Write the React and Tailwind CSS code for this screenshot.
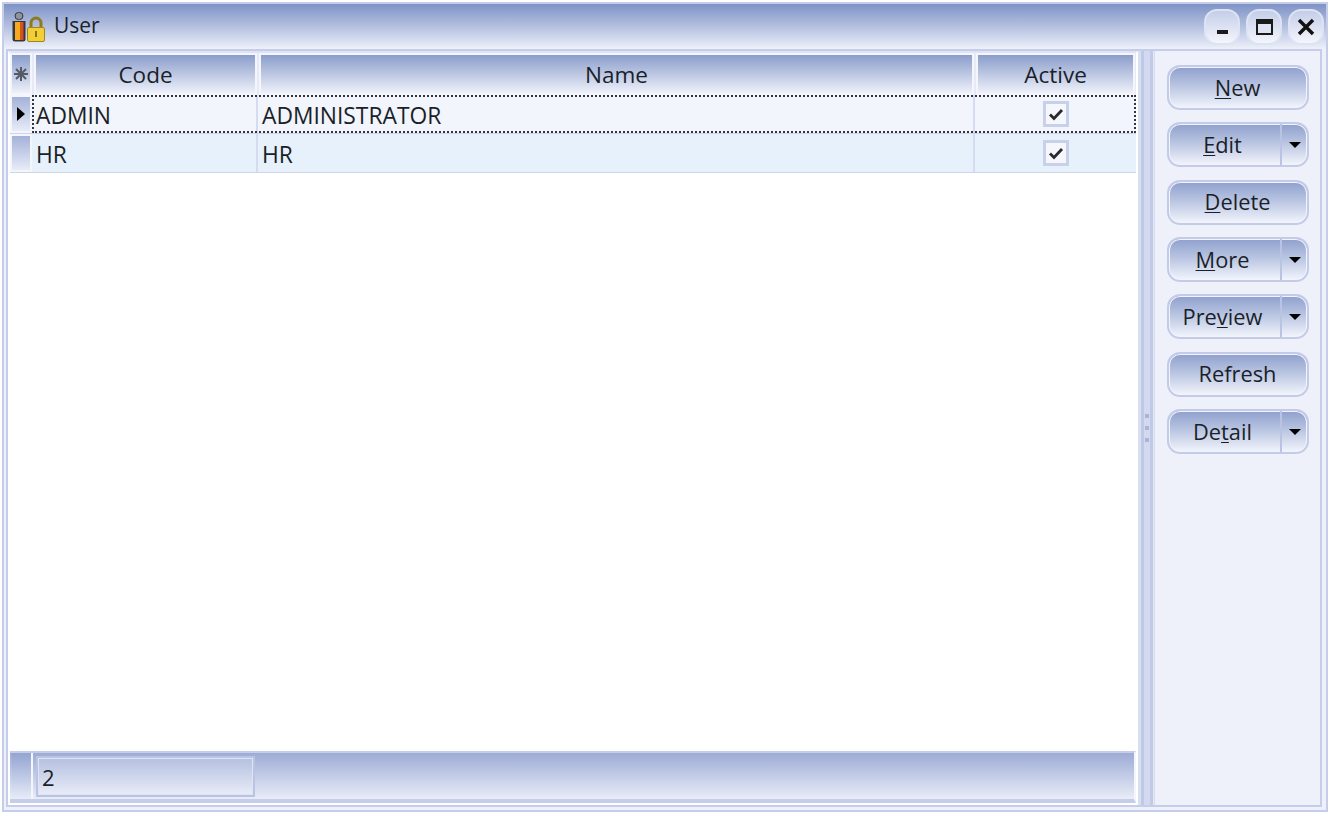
const font = { fontFamily: '"Open Sans", "Noto Sans", sans-serif' }

const headGrad = 'bg-gradient-to-b from-[#8b9dcb] via-[#bcc7e2] to-[#eef1fa]'

function UserIcon() {
  return (
    <svg width="33" height="30" viewBox="0 0 33 30">
      <rect x="3" y="0.5" width="8" height="7" rx="3.5" fill="#8f949c" stroke="#33373e" />
      <path d="M0.5 9h13v18a2.5 2.5 0 0 1-2.5 2.5H3A2.5 2.5 0 0 1 .5 27z" fill="#33363c" />
      <path d="M3 10h5.5v18H3z" fill="#f7aa1e" />
      <path d="M8 10h3.5v18H8z" fill="#d8531b" />
      <path d="M19 16v-5a5 5 0 0 1 10 0v5" fill="none" stroke="#8f7a1c" strokeWidth="3" />
      <rect x="15.5" y="15.5" width="17" height="14" rx="1.5" fill="#f2cf36" stroke="#a08718" />
      <rect x="23" y="19" width="2" height="6" fill="#8a7416" />
    </svg>
  )
}

function WinButton({ children }) {
  return (
    <button className="w-[36px] h-[36px] rounded-[13px] border-2 border-[#dde2f4] bg-gradient-to-b from-[#c4cee8] to-[#f4f6fc] flex items-center justify-center">
      {children}
    </button>
  )
}

function ActionButton({ before, mark, after, split }) {
  return (
    <button className="w-[142px] h-[45px] flex rounded-[13px] border-2 border-[#c3cbe8] bg-gradient-to-b from-[#8fa0cd] via-[#bdc8e3] to-[#f3f5fc] text-[21.8px] text-[#1a1f2a] overflow-hidden shadow-[inset_0_0_0_1px_#f2f4fc]">
      <span className={`flex-1 h-full flex items-center justify-center pt-[1px] ${split ? 'pr-[4px]' : 'pr-[1px]'}`}>
        {before}
        {mark && <span className="underline underline-offset-2 decoration-1">{mark}</span>}
        {after}
      </span>
      {split && (
        <span className="w-[27px] h-full border-l-2 border-[#b9c3e4] flex items-center justify-center">
          <span className="w-0 h-0 border-x-[6px] border-x-transparent border-t-[6px] border-t-black" />
        </span>
      )}
    </button>
  )
}

function HeadCell({ className, children }) {
  return (
    <div className={`h-[42px] flex items-center justify-center border-2 border-[#f4f6fc] ${headGrad} ${className}`}>
      {children}
    </div>
  )
}

function Check() {
  return (
    <span className="w-[26px] h-[26px] bg-[#f6f7fc] border-[3px] border-[#c9d0ea] flex items-center justify-center">
      <svg width="16" height="13" viewBox="0 0 16 13">
        <path d="M2 6.5l4 4 8-8.5" fill="none" stroke="#2a2a2e" strokeWidth="2.8" />
      </svg>
    </span>
  )
}

function Row({ code, name, selected, bg }) {
  return (
    <div className={`flex h-[39px] border-b border-[#cdd5ec] ${bg}`}>
      <div className="w-[22px] h-full border-2 border-[#f4f6fc] bg-gradient-to-b from-[#a4b2d8] to-[#e8ecf8] flex items-center justify-center">
        {selected && <span className="w-0 h-0 border-y-[7px] border-y-transparent border-l-[8px] border-l-black" />}
      </div>
      <div className={`flex-1 flex h-full ${selected ? 'outline-2 outline-dotted outline-[#33363f] -outline-offset-2' : ''}`}>
        <div className="w-[226px] h-full border-r-2 border-[#d6dcf0] flex items-center pl-[4px] pt-[4px]">{code}</div>
        <div className="w-[717px] h-full border-r-2 border-[#d6dcf0] flex items-center pl-[4px] pt-[4px]">{name}</div>
        <div className="flex-1 h-full flex items-center justify-center pl-[1px]">
          <Check />
        </div>
      </div>
    </div>
  )
}

function SplitterDots() {
  return (
    <div className="absolute top-[363px] left-[7px] flex flex-col gap-[8px]">
      <span className="w-[4px] h-[4px] bg-[#aab5da]" />
      <span className="w-[4px] h-[4px] bg-[#aab5da]" />
      <span className="w-[4px] h-[4px] bg-[#aab5da]" />
    </div>
  )
}

export default function App() {
  return (
    <div style={font} className="w-[1330px] h-[813px] bg-white pt-[2px] px-[2px] pb-[1px] text-[#1a1f2a] overflow-hidden">
      <div className="w-full h-full border-2 border-[#c5cdea] bg-[#eef1fa] flex flex-col">
        <div className="h-[45px] shrink-0 flex items-center pl-[8px] pr-[2px] bg-gradient-to-b from-[#7f93c6] via-[#b4c0df] to-[#eef1fa]">
          <UserIcon />
          <span className="ml-[9px] mb-[2px] text-[21px]">User</span>
          <div className="ml-auto flex gap-[6px]">
            <WinButton><span className="w-[11px] h-[4px] bg-[#1a1a1a] mt-[10px]" /></WinButton>
            <WinButton><span className="w-[17px] h-[16px] border-2 border-t-[5px] border-[#1a1a1a] bg-[#dfe4f4]" /></WinButton>
            <WinButton>
              <svg width="18" height="18" viewBox="0 0 18 18"><path d="M2 2l14 14M16 2L2 16" stroke="#111" strokeWidth="3.4" /></svg>
            </WinButton>
          </div>
        </div>

        <div className="flex-1 flex min-h-0 border-2 border-[#c5cdea] mx-[2px] mr-[4px]">
          <div className="w-[1130px] h-full flex flex-col bg-white border-2 border-white border-t-[#dfe4f5]">
            <div className="flex gap-[2px] bg-[#e6eaf7] text-[22.5px] shrink-0">
              <HeadCell className="w-[22px]">
                <svg width="14" height="14" viewBox="0 0 14 14"><path d="M7 0v14M0 7h14M2 2l10 10M12 2L2 12" stroke="#555a68" strokeWidth="2" /></svg>
              </HeadCell>
              <HeadCell className="w-[223px] pt-[2px]">Code</HeadCell>
              <HeadCell className="w-[715px] pt-[2px]">Name</HeadCell>
              <HeadCell className="w-[159px] pt-[2px]">Active</HeadCell>
            </div>
            <div className="flex-1 text-[22.8px] min-h-0">
              <Row code="ADMIN" name="ADMINISTRATOR" selected bg="bg-[#f2f5fb]" />
              <Row code="HR" name="HR" bg="bg-[#e6f1fc]" />
            </div>
            <div className="h-[52px] shrink-0 flex border-t-2 border-[#c5cdea] border-b-4 border-b-[#c5cdea] border-r-2 border-r-[#f4f6fc] pl-[2px] bg-gradient-to-b from-[#9dacd5] to-[#eaedf8]">
              <div className="w-[21px] h-full bg-gradient-to-b from-[#93a4d0] to-[#e8ecf8] border-r-2 border-[#f4f6fc]" />
              <div className="w-[219px] h-[41px] mt-[3px] ml-[3px] border-2 border-[#b9c3e4] bg-gradient-to-b from-[#b4c0df] to-[#e9ecf8] text-[22px] flex items-center pl-[4px] pt-[1px] shadow-[inset_0_0_0_1px_#dfe4f4]">2</div>
              <div className="flex-1" />
            </div>
          </div>

          <div className="w-[16px] h-full flex relative bg-[#e6eaf7]">
            <div className="w-[3px] bg-[#d9dff2]" />
            <div className="w-[3px] bg-[#bfc9e6]" />
            <div className="w-[6px] bg-[#d3daef]" />
            <div className="w-[3px] bg-[#c0cae7]" />
            <SplitterDots />
          </div>

          <div className="flex-1 h-full flex flex-col gap-[12.35px] pt-[14px] pl-[12px] bg-[#eef1fa] border-l border-[#d5dbf0]">
            <ActionButton mark="N" after="ew" />
            <ActionButton mark="E" after="dit" split />
            <ActionButton mark="D" after="elete" />
            <ActionButton mark="M" after="ore" split />
            <ActionButton before="Pre" mark="v" after="iew" split />
            <ActionButton before="Refresh" />
            <ActionButton before="De" mark="t" after="ail" split />
          </div>
        </div>
        <div className="h-[3px] shrink-0" />
      </div>
    </div>
  )
}
